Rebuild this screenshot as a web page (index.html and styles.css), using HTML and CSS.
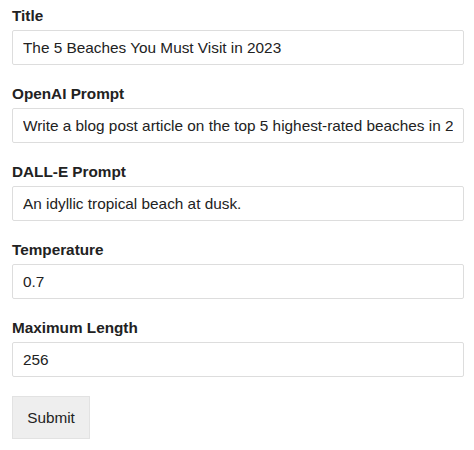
FILE: index.html
```html
<!DOCTYPE html>
<html lang="en">
<head>
  <meta charset="UTF-8">
  <meta name="viewport" content="width=device-width, initial-scale=1.0">
  <title>Blog Post Generator</title>
  <link rel="stylesheet" href="styles.css">
</head>
<body>

  <form class="post-form">
    <div class="form-group">
      <label for="title">Title</label>
      <input id="title" type="text" value="The 5 Beaches You Must Visit in 2023">
    </div>
    <div class="form-group">
      <label for="prompt">OpenAI Prompt</label>
      <input id="prompt" type="text" value="Write a blog post article on the top 5 highest-rated beaches in 2023">
    </div>
    <div class="form-group">
      <label for="dalle">DALL-E Prompt</label>
      <input id="dalle" type="text" value="An idyllic tropical beach at dusk.">
    </div>
    <div class="form-group">
      <label for="temperature">Temperature</label>
      <input id="temperature" type="text" value="0.7">
    </div>
    <div class="form-group">
      <label for="maxlength">Maximum Length</label>
      <input id="maxlength" type="text" value="256">
    </div>
    <button type="submit" class="submit-btn">Submit</button>
  </form>

</body>
</html>
```

FILE: styles.css
```css
* {
  box-sizing: border-box;
}

body {
  margin: 0;
  font-family: "Liberation Sans", Arial, sans-serif;
  color: #222;
  background: #fff;
}

.post-form {
  padding: 7px 10px 0 12px;
}

.form-group {
  margin-bottom: 20px;
}

.form-group:last-of-type {
  margin-bottom: 19px;
}

.form-group label {
  display: block;
  font-size: 15.3px;
  font-weight: 700;
  line-height: 18px;
  margin-bottom: 5px;
}

.form-group input {
  display: block;
  width: 100%;
  height: 35px;
  padding: 0 10px;
  border: 1px solid #ddd;
  border-radius: 2px;
  font-family: inherit;
  font-size: 15.35px;
  color: #222;
  background: #fff;
}

.submit-btn {
  height: 43px;
  width: 78px;
  border: 1px solid #e2e2e2;
  border-radius: 0;
  background: #eee;
  font-family: inherit;
  font-size: 15.3px;
  color: #222;
}
```
